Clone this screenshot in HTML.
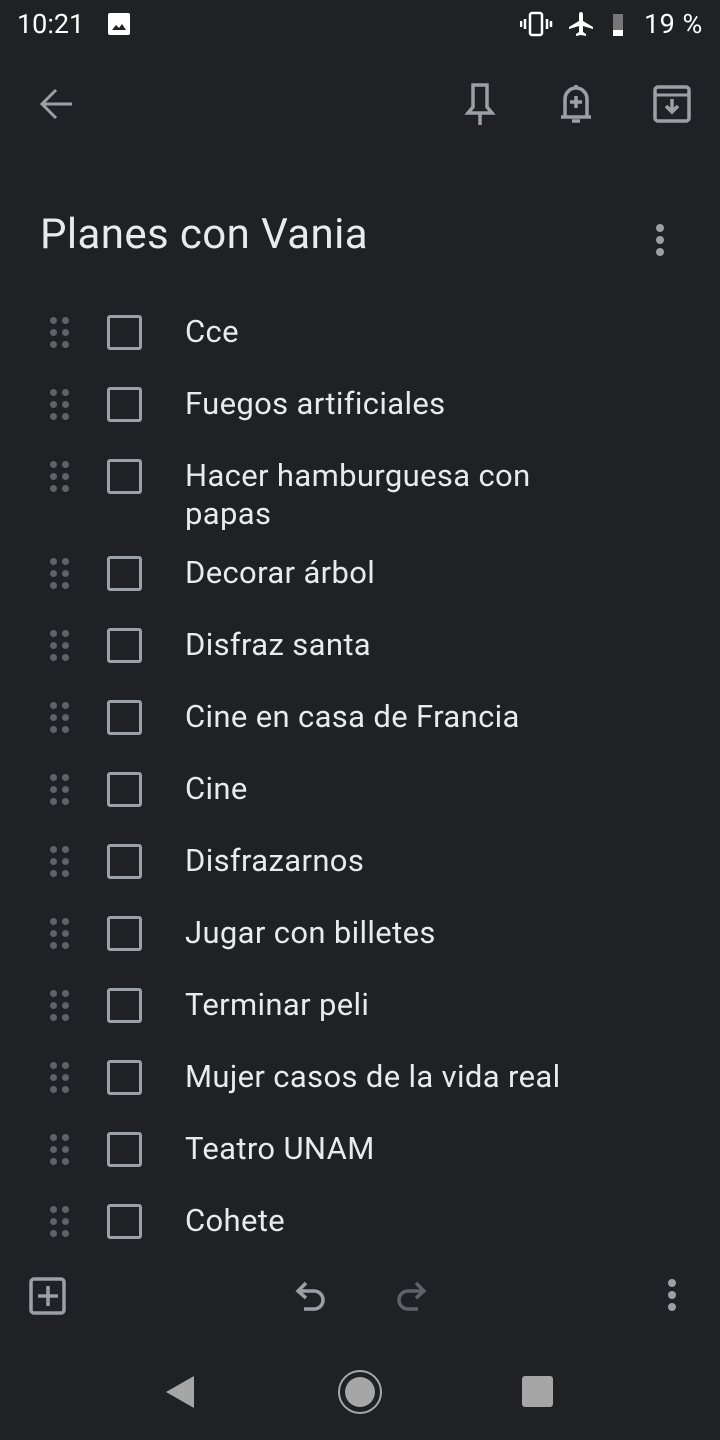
<!DOCTYPE html>
<html><head><meta charset="utf-8"><style>
*{margin:0;padding:0;box-sizing:border-box}
body{width:720px;height:1440px;background:#202124;font-family:"Roboto","Liberation Sans",sans-serif;color:#e8eaed;position:relative;overflow:hidden}
.a{position:absolute}
.t{position:absolute;left:185px;font-size:31px;letter-spacing:0.35px;line-height:38px;color:#e8eaed}
.cb{position:absolute;left:107px;width:35px;height:35px;border:3px solid #9aa0a6;border-radius:3px}
.dr{position:absolute;left:49px;width:22px;height:34px}
.dr i{position:absolute;width:7px;height:7px;border-radius:50%;background:#5f6368}
</style></head><body>
<div class="a" style="left:17px;top:8px;font-size:27px;color:#fff">10:21</div>
<svg class="a" style="left:107px;top:12px" width="24" height="24"><rect x="1" y="1" width="22" height="22" rx="2" fill="#fff"/><path d="M5 18l4-5 3 3 3-4 4 6z" fill="#202124"/></svg>
<svg class="a" style="left:520px;top:10px" width="170" height="30">
<g fill="none" stroke="#fff" stroke-width="2.5"><rect x="10" y="3" width="12" height="22" rx="2"/><path d="M5 9v10M27 9v10M1 11v6M31 11v6"/></g>
<path d="M61 2c2 0 2 2 2 3v6l10 6v2l-10-3v6l3 2v2l-5-1-5 1v-2l3-2v-6l-10 3v-2l10-6v-6c0-1 0-3 2-3z" fill="#fff"/>
<rect x="93" y="4" width="10" height="22" fill="#777"/><rect x="93" y="20" width="10" height="6" fill="#fff"/>
</svg>
<div class="a" style="left:644px;top:8px;font-size:27px;color:#fff;letter-spacing:0.5px">19 %</div>
<svg class="a" style="left:36px;top:84px" width="40" height="40"><path d="M36 20H6M20 6L6 20l14 14" fill="none" stroke="#9aa0a6" stroke-width="3"/></svg>
<svg class="a" style="left:460px;top:82px" width="40" height="44"><path d="M13 3h14v22l5 6H8l5-6z M20 31v12" fill="none" stroke="#9aa0a6" stroke-width="3.5"/></svg>
<svg class="a" style="left:556px;top:82px" width="40" height="44"><path d="M20 3v3M9 34V17a11 11 0 0 1 22 0v17M5 35h30M16 39h8" fill="none" stroke="#9aa0a6" stroke-width="3.5"/><path d="M20 14v12M14 20h12" stroke="#9aa0a6" stroke-width="3.5"/></svg>
<svg class="a" style="left:652px;top:84px" width="40" height="40"><rect x="3" y="3" width="34" height="34" rx="3" fill="none" stroke="#9aa0a6" stroke-width="3.5"/><path d="M3 11h34" stroke="#9aa0a6" stroke-width="3"/><path d="M20 15v12M14 22l6 6 6-6" fill="none" stroke="#9aa0a6" stroke-width="3.5"/></svg>
<div class="a" style="left:40px;top:210px;font-size:42px;letter-spacing:0.4px;color:#e8eaed;line-height:50px">Planes con Vania</div>
<svg class="a" style="left:650px;top:222px" width="20" height="36"><circle cx="10" cy="6" r="4" fill="#9aa0a6"/><circle cx="10" cy="18" r="4" fill="#9aa0a6"/><circle cx="10" cy="30" r="4" fill="#9aa0a6"/></svg>
<div id="rows"></div>
<script>
var items=[["Cce",332],["Fuegos artificiales",404],["Hacer hamburguesa con<br>papas",476],["Decorar árbol",573],["Disfraz santa",645],["Cine en casa de Francia",717],["Cine",789],["Disfrazarnos",861],["Jugar con billetes",933],["Terminar peli",1005],["Mujer casos de la vida real",1077],["Teatro UNAM",1149],["Cohete",1221]];
var h="";
items.forEach(function(it){var y=it[1];
h+='<div class="dr" style="top:'+(y-16)+'px"><i style="left:1px;top:1px"></i><i style="left:13px;top:1px"></i><i style="left:1px;top:13px"></i><i style="left:13px;top:13px"></i><i style="left:1px;top:25px"></i><i style="left:13px;top:25px"></i></div>';
h+='<div class="cb" style="top:'+(y-17)+'px"></div>';
h+='<div class="t" style="top:'+(y-19)+'px">'+it[0]+'</div>';});
document.getElementById("rows").innerHTML=h;
</script>
<svg class="a" style="left:28px;top:1276px" width="40" height="40"><rect x="3" y="3" width="33" height="34" rx="3" fill="none" stroke="#9aa0a6" stroke-width="3.5"/><path d="M20 10v20M10 20h20" stroke="#9aa0a6" stroke-width="3.5"/></svg>
<svg class="a" style="left:294px;top:1280px" width="40" height="36"><path d="M12 3L4 11l8 7M5 11h15a9 9 0 0 1 0 18h-10" fill="none" stroke="#9aa0a6" stroke-width="3.5"/></svg>
<svg class="a" style="left:388px;top:1280px" width="40" height="36"><path d="M28 3l8 8-8 7M35 11H20a9 9 0 0 0 0 18h10" fill="none" stroke="#5f6368" stroke-width="3.5"/></svg>
<svg class="a" style="left:662px;top:1278px" width="20" height="36"><circle cx="10" cy="5" r="4" fill="#9aa0a6"/><circle cx="10" cy="17" r="4" fill="#9aa0a6"/><circle cx="10" cy="29" r="4" fill="#9aa0a6"/></svg>
<svg class="a" style="left:160px;top:1370px" width="40" height="44"><path d="M34 6v32L6 22z" fill="#a6a6a6"/></svg>
<svg class="a" style="left:336px;top:1368px" width="48" height="48"><circle cx="24" cy="24" r="21" fill="none" stroke="#a6a6a6" stroke-width="2"/><circle cx="24" cy="24" r="15" fill="#a6a6a6"/></svg>
<div class="a" style="left:522px;top:1376px;width:31px;height:31px;background:#a6a6a6;border-radius:3px"></div>
</body></html>
